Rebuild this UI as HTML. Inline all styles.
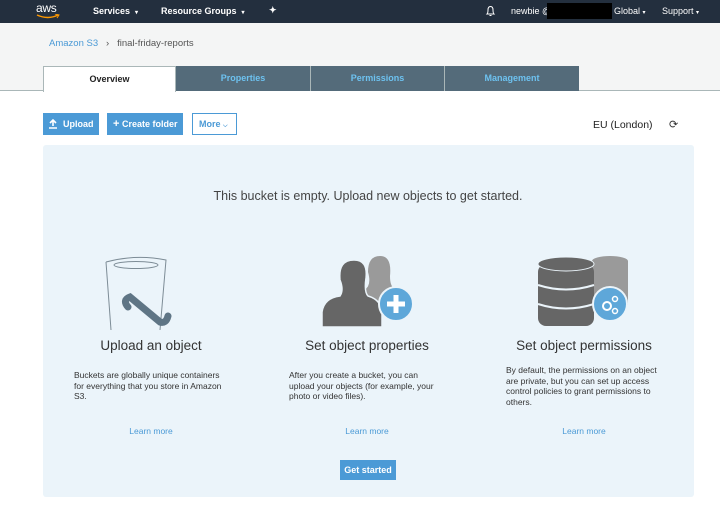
<!DOCTYPE html>
<html><head><style>
*{margin:0;padding:0;box-sizing:border-box}
body{width:720px;height:512px;overflow:hidden;background:#fff;font-family:"Liberation Sans",Arial,sans-serif;position:relative}
.a{position:absolute}
.nav{left:0;top:0;width:720px;height:23px;background:#232f3e;color:#fff;font-size:9px;font-weight:bold}
.top{left:0;top:23px;width:720px;height:68px;background:#f4f5f5;border-bottom:1px solid #aab7b8}
.tab{top:66px;height:25px;background:#546b7a;color:#6dc2f0;font-size:9px;font-weight:bold;text-align:center;line-height:25px;border-right:1px solid #aab7b8}
.btn{top:113px;height:22px;background:#4b9ad6;color:#fff;font-size:9px;font-weight:bold;line-height:22px}
.panel{left:43px;top:145px;width:651px;height:352px;background:#ebf4fa;border-radius:3px}
.t{font-size:13.5px;color:#333;text-align:center;width:220px}
.d{font-size:8.5px;color:#333;line-height:10.6px;width:150px}
.lm{font-size:8.5px;color:#4b9ad6;text-align:center;width:220px}
</style></head><body>
<div class="a nav">
 <div class="a" style="left:36px;top:1px;font-size:12px;font-weight:normal;letter-spacing:-.3px">aws</div>
 <svg class="a" style="left:36px;top:14px" width="24" height="6"><path d="M1 1 Q12 6 22 1" stroke="#f90" stroke-width="1.5" fill="none"/><path d="M19 0 L23 1 L21 4" stroke="#f90" stroke-width="1" fill="none"/></svg>
 <div class="a" style="left:93px;top:6px">Services &nbsp;<span style="font-size:6px">▾</span></div>
 <div class="a" style="left:161px;top:6px">Resource Groups &nbsp;<span style="font-size:6px">▾</span></div>
 <div class="a" style="left:269px;top:5px;font-size:9px">✦</div>
 <svg class="a" style="left:485px;top:5px" width="11" height="12"><path d="M2 9 Q3 8 3 5 Q3 1.5 5.5 1.5 Q8 1.5 8 5 Q8 8 9 9Z M4.5 10.5h2" stroke="#fff" fill="none" stroke-width="1"/></svg>
 <div class="a" style="left:511px;top:6px;font-weight:normal">newbie @</div>
 <div class="a" style="left:547px;top:3px;width:65px;height:16px;background:#000"></div>
 <div class="a" style="left:614px;top:6px;font-weight:normal">Global <span style="font-size:6px">▾</span></div>
 <div class="a" style="left:662px;top:6px;font-weight:normal">Support <span style="font-size:6px">▾</span></div>
</div>
<div class="a top"></div>
<div class="a" style="left:49px;top:38px;font-size:9.5px;color:#4b9ad6">Amazon S3 <span style="color:#555">&nbsp;&nbsp;›&nbsp;&nbsp; final-friday-reports</span></div>
<div class="a tab" style="left:43px;width:133px;background:#fff;color:#222;border:1px solid #aab7b8;border-bottom:none;height:26px">Overview</div>
<div class="a tab" style="left:176px;width:135px">Properties</div>
<div class="a tab" style="left:311px;width:134px">Permissions</div>
<div class="a tab" style="left:445px;width:134px;border-right:none">Management</div>
<div class="a btn" style="left:43px;width:56px;padding-left:20px">Upload</div>
<svg class="a" style="left:48px;top:119px" width="10" height="10"><path d="M5 1v6M2 4l3-3 3 3M1 9h8" stroke="#fff" stroke-width="1.6" fill="none"/></svg>
<div class="a btn" style="left:107px;width:76px;padding-left:6px"><b style="font-size:11px">+</b> Create folder</div>
<div class="a btn" style="left:192px;width:45px;background:#fff;border:1px solid #4b9ad6;color:#4b9ad6;padding-left:6px;line-height:20px">More <span style="font-size:6px">⌵</span></div>
<div class="a" style="left:593px;top:119px;font-size:10.5px;color:#222">EU (London)</div>
<div class="a" style="left:669px;top:118px;font-size:11px;color:#333">⟳</div>
<div class="a panel"></div>
<div class="a" style="left:0;width:736px;top:189px;text-align:center;font-size:12.5px;color:#444">This bucket is empty. Upload new objects to get started.</div>
<svg class="a" style="left:100px;top:252px" width="110" height="80">
 <path d="M6 10 Q36 2 66 8 L60 78 M6 10 L11 78" stroke="#7d8c96" fill="none" stroke-width="1"/>
 <ellipse cx="36" cy="13" rx="22" ry="3.5" stroke="#7d8c96" fill="none"/>
 <path d="M28 55 Q22 48 30 45 L60 70 Q66 72 68 64" stroke="#5f7585" stroke-width="7" fill="none" stroke-linecap="round"/>
</svg>
<svg class="a" style="left:320px;top:252px" width="100" height="76">
 <path d="M48 20 Q48 4 60 4 Q72 4 70 24 Q70 34 74 36 L72 60 L42 60 L44 38 Q52 34 48 20Z" fill="#9a9a9a"/>
 <path d="M20 28 Q18 8 34 8 Q48 8 46 26 Q44 40 48 44 Q62 48 62 62 L62 75 L2 75 L2 60 Q4 46 20 44 Q24 38 20 28Z" fill="#666" stroke="#ebf4fa" stroke-width="1.5"/>
 <circle cx="76" cy="52" r="17" fill="#5ea7d9" stroke="#ebf4fa" stroke-width="2"/>
 <path d="M76 43v18M67 52h18" stroke="#fff" stroke-width="5"/>
</svg>
<svg class="a" style="left:536px;top:252px" width="100" height="76">
 <ellipse cx="74" cy="9" rx="18" ry="5" fill="#9a9a9a"/><rect x="56" y="9" width="36" height="44" fill="#9a9a9a"/>
 <rect x="2" y="12" width="56" height="62" rx="8" fill="#666"/>
 <ellipse cx="30" cy="12" rx="28" ry="7" fill="#666" stroke="#ebf4fa" stroke-width="1"/>
 <path d="M2 33 Q30 42 58 33 M2 52 Q30 61 58 52" stroke="#ebf4fa" stroke-width="2" fill="none"/>
 <circle cx="74" cy="52" r="17" fill="#5ea7d9" stroke="#ebf4fa" stroke-width="2"/>
 <circle cx="71" cy="54" r="4" fill="none" stroke="#fff" stroke-width="2"/><circle cx="79" cy="47" r="2.5" fill="none" stroke="#fff" stroke-width="1.5"/><circle cx="79" cy="59" r="2.5" fill="none" stroke="#fff" stroke-width="1.5"/>
</svg>
<div class="a t" style="left:41px;top:338px">Upload an object</div>
<div class="a t" style="left:257px;top:338px">Set object properties</div>
<div class="a t" style="left:474px;top:338px">Set object permissions</div>
<div class="a d" style="left:74px;top:370px">Buckets are globally unique containers for everything that you store in Amazon S3.</div>
<div class="a d" style="left:289px;top:370px;width:152px">After you create a bucket, you can upload your objects (for example, your photo or video files).</div>
<div class="a d" style="left:506px;top:365px;width:200px">By default, the permissions on an object<br>are private, but you can set up access<br>control policies to grant permissions to<br>others.</div>
<div class="a lm" style="left:41px;top:426px">Learn more</div>
<div class="a lm" style="left:257px;top:426px">Learn more</div>
<div class="a lm" style="left:474px;top:426px">Learn more</div>
<div class="a btn" style="left:340px;top:460px;width:56px;height:20px;line-height:20px;text-align:center">Get started</div>
</body></html>
